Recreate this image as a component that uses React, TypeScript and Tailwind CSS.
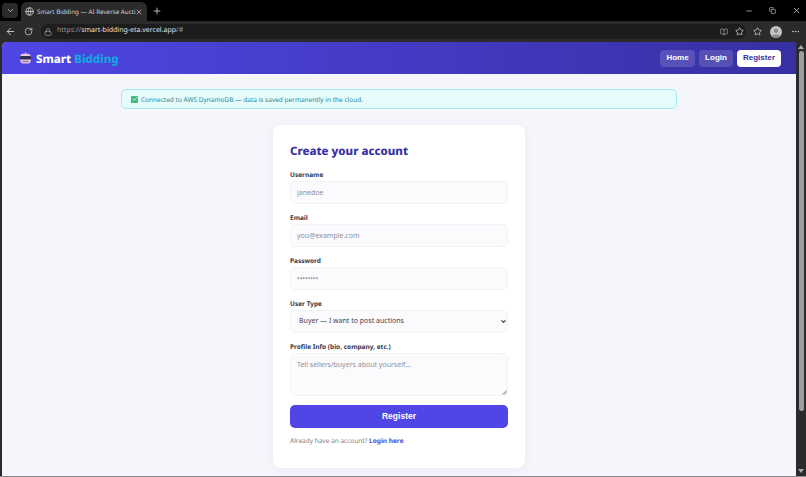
import { ArrowLeft, BookOpen, Check, ChevronDown, Copy, Globe, Lock, Minus, MoreHorizontal, Plus, RotateCw, Star, X } from "lucide-react";

const inputClass =
  "block w-full h-[23px] rounded-[5px] border border-[#f2f3f7] bg-[#fbfbfe] px-[6px] text-[7px] text-[#3f4350] outline-none placeholder:text-[#8e9096]";
const labelClass = "block mb-[1px] text-[6.5px] leading-[10px] font-bold text-[#33364a]";

const RobotLogo = () => (
  <svg width="13" height="13" viewBox="0 0 14 14" className="shrink-0">
    <rect x="6.4" y="0.4" width="1.2" height="2" fill="#e4a7c4" />
    <rect x="1.5" y="2" width="11" height="10.5" rx="3" fill="#ecc9dc" />
    <rect x="1" y="4.2" width="12" height="3.8" rx="1.4" fill="#2f2f55" />
    <rect x="3.5" y="9.5" width="7" height="1.6" rx="0.8" fill="#9a7fb0" />
  </svg>
);

const Avatar = () => (
  <svg width="12" height="12" viewBox="0 0 12 12" className="ml-[8px] shrink-0">
    <circle cx="6" cy="6" r="6" fill="#c4c4c4" />
    <circle cx="6" cy="4.6" r="2.2" fill="#8a8a8a" />
    <path d="M2 10.2 C2.8 7.8 9.2 7.8 10 10.2 A6 6 0 0 1 2 10.2 Z" fill="#8a8a8a" />
  </svg>
);

const BrowserChrome = () => (
  <>
    <div className="flex h-[21px] items-end bg-black pl-[2px] text-[#d6d6d6]">
      <div className="mb-[3px] flex h-[15px] w-[16px] shrink-0 items-center justify-center rounded-[4px] bg-[#2a2a2a]">
        <ChevronDown size={9} />
      </div>
      <div className="ml-[3px] flex h-[19px] w-[126px] shrink-0 items-center rounded-t-[6px] bg-[#2b2b2b] pl-[4px] pr-[4px]">
        <Globe size={9} className="shrink-0" />
        <span className="ml-[3px] min-w-0 flex-1 whitespace-nowrap text-[6.25px] text-[#d0d0d0]">Smart Bidding — AI Reverse Aucti</span>
        <X size={8} className="shrink-0" />
      </div>
      <div className="mb-[5px] ml-[5px] shrink-0">
        <Plus size={10} />
      </div>
      <div className="mb-[6px] ml-[583px] flex shrink-0 items-center">
        <Minus size={8} />
        <Copy size={7} className="ml-[16px]" />
        <X size={9} className="ml-[16px]" />
      </div>
    </div>
    <div className="flex h-[21px] items-center bg-[#2b2b2b] pl-[5px] text-[#cfcfcf]">
      <ArrowLeft size={11} />
      <RotateCw size={9} className="ml-[8px]" />
      <div className="ml-[8px] flex h-[15px] w-[705px] items-center rounded-full bg-[#1d1d1d] pl-[3px] pr-[2px]">
        <Lock size={8} className="text-[#a8a8a8]" />
        <span className="ml-[5px] text-[7px] text-[#e0e0e0]">
          <span className="text-[#9a9a9a]">https://</span>smart-bidding-eta.vercel.app<span className="text-[#9a9a9a]">/#</span>
        </span>
        <div className="ml-auto flex items-center gap-[7px] text-[#a8a8a8]">
          <BookOpen size={8} />
          <Star size={9} className="text-[#d0d0d0]" />
        </div>
      </div>
      <Star size={9} className="ml-[7px]" />
      <Avatar />
      <MoreHorizontal size={9} className="ml-[9px]" />
    </div>
  </>
);

const App = () => {
  return (
    <div className="flex h-[477px] w-[806px] flex-col overflow-hidden bg-[#2b2b2b] font-['Noto_Sans',sans-serif] [text-rendering:geometricPrecision]">
      <BrowserChrome />
      <div className="flex min-h-0 flex-1">
        <div className="w-[2px] shrink-0" />
        <div className="flex-1 overflow-hidden rounded-tl-[5px] bg-[#f5f6fc]">
          <header className="flex h-[32px] items-center bg-gradient-to-r from-[#4f46e5] to-[#3730a3] pl-[17px] pr-[15px]">
            <RobotLogo />
            <div className="ml-[4px] pt-[3px] text-[11.5px] font-extrabold text-white">
              Smart <span className="text-[#12a8e0]">Bidding</span>
            </div>
            <nav className="ml-auto flex gap-[4px] font-['Liberation_Sans',sans-serif] text-[8px] font-bold text-white">
              <button className="h-[17px] w-[35px] rounded-[4px] bg-white/15">Home</button>
              <button className="h-[17px] w-[34px] rounded-[4px] bg-white/15">Login</button>
              <button className="h-[17px] w-[44px] rounded-[4px] bg-white text-[#3730a3]">Register</button>
            </nav>
          </header>
          <div className="flex flex-col items-center pt-[15px]">
            <div className="flex h-[20px] w-[556px] items-center rounded-[5px] border border-[#a5e8ef] bg-[#e6fbfb] pl-[9px] text-[6.5px] text-[#2b8a94]">
              <span className="flex h-[7px] w-[7px] items-center justify-center rounded-[1px] bg-[#3fbb7d] text-white">
                <Check size={6} strokeWidth={3} />
              </span>
              <span className="ml-[3px] pt-[2px]">Connected to AWS DynamoDB — data is saved permanently in the cloud.</span>
            </div>
            <form className="mt-[16px] w-[252px] rounded-[8px] bg-white px-[17px] pb-[22px] pt-[18px] shadow-[0_2px_10px_rgba(60,60,120,0.06)]">
              <h1 className="text-[11.5px] leading-[18px] font-extrabold text-[#3730a3]">Create your account</h1>
              <div className="mt-[9px]">
                <label className={labelClass}>Username</label>
                <input className={inputClass} placeholder="janedoe" />
              </div>
              <div className="mt-[9px]">
                <label className={labelClass}>Email</label>
                <input className={inputClass} placeholder="you@example.com" />
              </div>
              <div className="mt-[9px]">
                <label className={labelClass}>Password</label>
                <input className={inputClass} placeholder="••••••••" />
              </div>
              <div className="mt-[9px]">
                <label className={labelClass}>User Type</label>
                <div className="relative">
                  <select className={inputClass + " appearance-none pl-[8px]"}>
                    <option>Buyer — I want to post auctions</option>
                  </select>
                  <ChevronDown size={7} strokeWidth={3.5} className="absolute right-[1px] top-[8px] text-[#333]" />
                </div>
              </div>
              <div className="mt-[9px]">
                <label className={labelClass}>Profile Info (bio, company, etc.)</label>
                <div className="relative">
                  <textarea className="block h-[43px] w-full resize-none rounded-[5px] border border-[#f2f3f7] bg-[#fbfbfe] px-[6px] py-[6px] text-[7px] outline-none placeholder:text-[#8e9096]" placeholder="Tell sellers/buyers about yourself..." />
                  <svg width="5" height="5" viewBox="0 0 5 5" className="absolute bottom-[1px] right-[1px]">
                    <path d="M0.5 4.5 L4.5 0.5 M2.5 4.5 L4.5 2.5" stroke="#555" strokeWidth="0.7" fill="none" />
                  </svg>
                </div>
              </div>
              <button type="button" className="mt-[9px] h-[23px] w-full rounded-[5px] bg-[#4f46e5] font-['Liberation_Sans',sans-serif] text-[8.5px] font-bold text-white">Register</button>
              <p className="mt-[8px] text-[6.5px] leading-[10px] text-[#7b8090]">
                Already have an account? <a className="font-bold text-[#4f46e5]">Login here</a>
              </p>
            </form>
          </div>
        </div>
        <div className="flex w-[10px] shrink-0 flex-col items-center bg-[#2b2b2b] pt-[3px]">
          <div className="h-0 w-0 border-x-[3px] border-b-[4px] border-x-transparent border-b-[#aaa]" />
          <div className="mt-[2px] h-[360px] w-[5px] rounded-full bg-[#9e9e9e]" />
          <div className="mt-auto mb-[3px] h-0 w-0 border-x-[3px] border-t-[4px] border-x-transparent border-t-[#aaa]" />
        </div>
      </div>
      <div className="h-[1px] shrink-0 bg-[#8a8a8a]" />
    </div>
  );
};

export default App;
